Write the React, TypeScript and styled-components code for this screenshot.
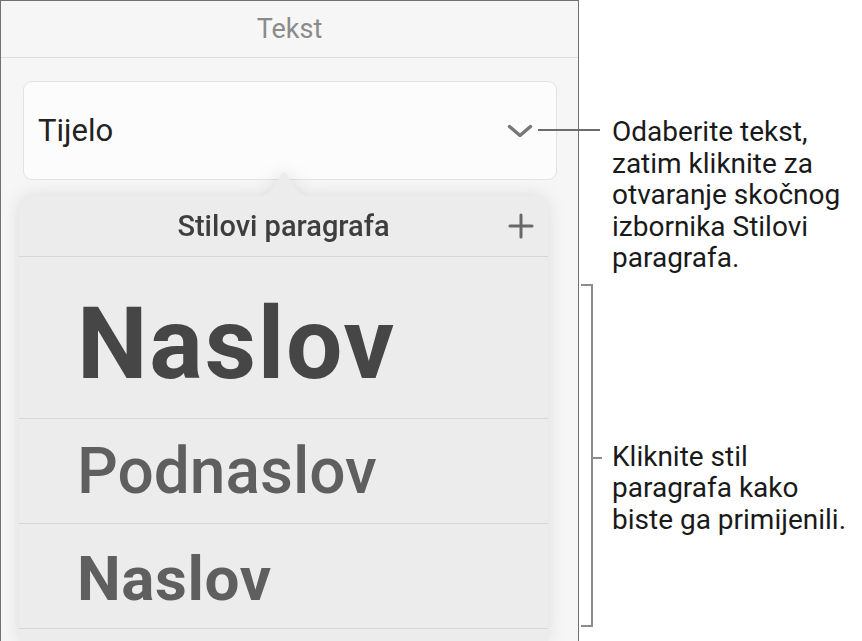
import styled, { createGlobalStyle } from "styled-components";

const GlobalStyle = createGlobalStyle`
  html, body {
    margin: 0;
    padding: 0;
    background: #ffffff;
  }
  body {
    font-family: Roboto, "Liberation Sans", Arial, sans-serif;
    -webkit-font-smoothing: antialiased;
  }
`;

const Stage = styled.div`
  display: flex;
  width: 862px;
  height: 641px;
  overflow: hidden;
`;

const Panel = styled.div`
  width: 577px;
  flex-shrink: 0;
  display: flex;
  flex-direction: column;
  background: #f6f6f6;
  border: 1.5px solid #717171;
  border-bottom: none;
`;

const PanelTitle = styled.div`
  height: 56px;
  flex-shrink: 0;
  display: flex;
  align-items: center;
  justify-content: center;
  font-size: 27px;
  color: #8b8b8b;
  border-bottom: 1px solid #dedede;
`;

const StyleSelect = styled.div`
  margin: 23px 21px 0 22px;
  height: 97px;
  flex-shrink: 0;
  display: flex;
  align-items: center;
  justify-content: space-between;
  padding: 0 23px 0 14px;
  background: #fcfcfc;
  border: 1px solid #e3e3e3;
  border-radius: 9px;
`;

const SelectValue = styled.span`
  font-size: 31px;
  color: #222222;
`;

const Popover = styled.div`
  position: relative;
  margin: 16px 0 0 18px;
  width: 529px;
  flex: 1;
  min-height: 0;
  display: flex;
  flex-direction: column;
  background: #ececec;
  border-radius: 14px 14px 0 0;
  filter: drop-shadow(0 0 9px rgba(0, 0, 0, 0.11));
`;

const PopoverArrow = styled.svg`
  position: absolute;
  top: -26px;
  left: 235px;
`;

const PopoverHeader = styled.div`
  position: relative;
  height: 60px;
  flex-shrink: 0;
  display: flex;
  align-items: center;
  justify-content: center;
  border-bottom: 1.5px solid #d7d7d7;
`;

const PopoverTitle = styled.span`
  font-size: 29px;
  font-weight: 500;
  color: #3e3e3e;
`;

const AddButton = styled.svg`
  position: absolute;
  right: 14px;
  top: 17px;
`;

const StyleRow = styled.div<{ $height: number; $pad: number }>`
  height: ${(p) => p.$height}px;
  flex-shrink: 0;
  box-sizing: border-box;
  padding: ${(p) => p.$pad}px 0 0 58px;
  border-bottom: 1.5px solid #d7d7d7;
`;

const StyleName = styled.span<{
  $size: number;
  $weight: number;
  $color: string;
  $track: number;
}>`
  display: block;
  line-height: 1;
  font-size: ${(p) => p.$size}px;
  font-weight: ${(p) => p.$weight};
  letter-spacing: ${(p) => p.$track}px;
  color: ${(p) => p.$color};
  white-space: nowrap;
`;

const Annotations = styled.div`
  flex: 1;
  display: flex;
  flex-direction: column;
  padding-top: 116px;
`;

const CalloutText = styled.div`
  font-size: 28px;
  line-height: 31.5px;
  color: #1a1a1a;
  white-space: nowrap;
`;

const LeaderCallout = styled(CalloutText)`
  position: relative;
  padding-left: 33px;

  &::before {
    content: "";
    position: absolute;
    left: -41px;
    top: 13px;
    width: 62px;
    height: 1.5px;
    background: #6c6c6c;
  }
`;

const BracketCallout = styled.div`
  display: flex;
  align-items: flex-start;
  margin-top: 10px;
`;

const Bracket = styled.div`
  position: relative;
  width: 10px;
  height: 339px;
  flex-shrink: 0;
  margin-left: 2px;
  border: 2px solid #8c8c8c;
  border-left: none;

  &::after {
    content: "";
    position: absolute;
    right: -11px;
    top: 171px;
    width: 10px;
    height: 2px;
    background: #8c8c8c;
  }
`;

const BracketText = styled(CalloutText)`
  margin: 157px 0 0 19px;
`;

function Chevron() {
  return (
    <svg width="26" height="14" viewBox="0 0 26 14">
      <path
        d="M2.5 2.5 L13 11.5 L23.5 2.5"
        fill="none"
        stroke="#777777"
        strokeWidth="3.4"
        strokeLinecap="round"
        strokeLinejoin="round"
      />
    </svg>
  );
}

const rows = [
  { label: "Naslov", height: 162, pad: 37, size: 100, weight: 700, color: "#464646", track: 1.8 },
  { label: "Podnaslov", height: 105, pad: 21, size: 64, weight: 500, color: "#5f5f5f", track: 0 },
  { label: "Naslov", height: 105, pad: 24, size: 62, weight: 700, color: "#5f5f5f", track: 0.6 },
  { label: "", height: 60, pad: 0, size: 62, weight: 700, color: "#5f5f5f", track: 0 },
];

export default function App() {
  return (
    <Stage>
      <GlobalStyle />
      <Panel>
        <PanelTitle>Tekst</PanelTitle>
        <StyleSelect>
          <SelectValue>Tijelo</SelectValue>
          <Chevron />
        </StyleSelect>
        <Popover>
          <PopoverArrow width="60" height="27" viewBox="0 0 60 27">
            <path
              d="M0 27 C12 27 15 23 20 16 L27 4.5 Q30 0 33 4.5 L40 16 C45 23 48 27 60 27 Z"
              fill="#ececec"
            />
          </PopoverArrow>
          <PopoverHeader>
            <PopoverTitle>Stilovi paragrafa</PopoverTitle>
            <AddButton width="26" height="26" viewBox="0 0 26 26">
              <path
                d="M13 2 V24 M2 13 H24"
                stroke="#686868"
                strokeWidth="3"
                strokeLinecap="round"
              />
            </AddButton>
          </PopoverHeader>
          {rows.map((r, i) => (
            <StyleRow key={i} $height={r.height} $pad={r.pad}>
              {r.label && (
                <StyleName
                  $size={r.size}
                  $weight={r.weight}
                  $color={r.color}
                  $track={r.track}
                >
                  {r.label}
                </StyleName>
              )}
            </StyleRow>
          ))}
        </Popover>
      </Panel>
      <Annotations>
        <LeaderCallout>
          Odaberite tekst,
          <br />
          zatim kliknite za
          <br />
          otvaranje skočnog
          <br />
          izbornika Stilovi
          <br />
          paragrafa.
        </LeaderCallout>
        <BracketCallout>
          <Bracket />
          <BracketText>
            Kliknite stil
            <br />
            paragrafa kako
            <br />
            biste ga primijenili.
          </BracketText>
        </BracketCallout>
      </Annotations>
    </Stage>
  );
}
